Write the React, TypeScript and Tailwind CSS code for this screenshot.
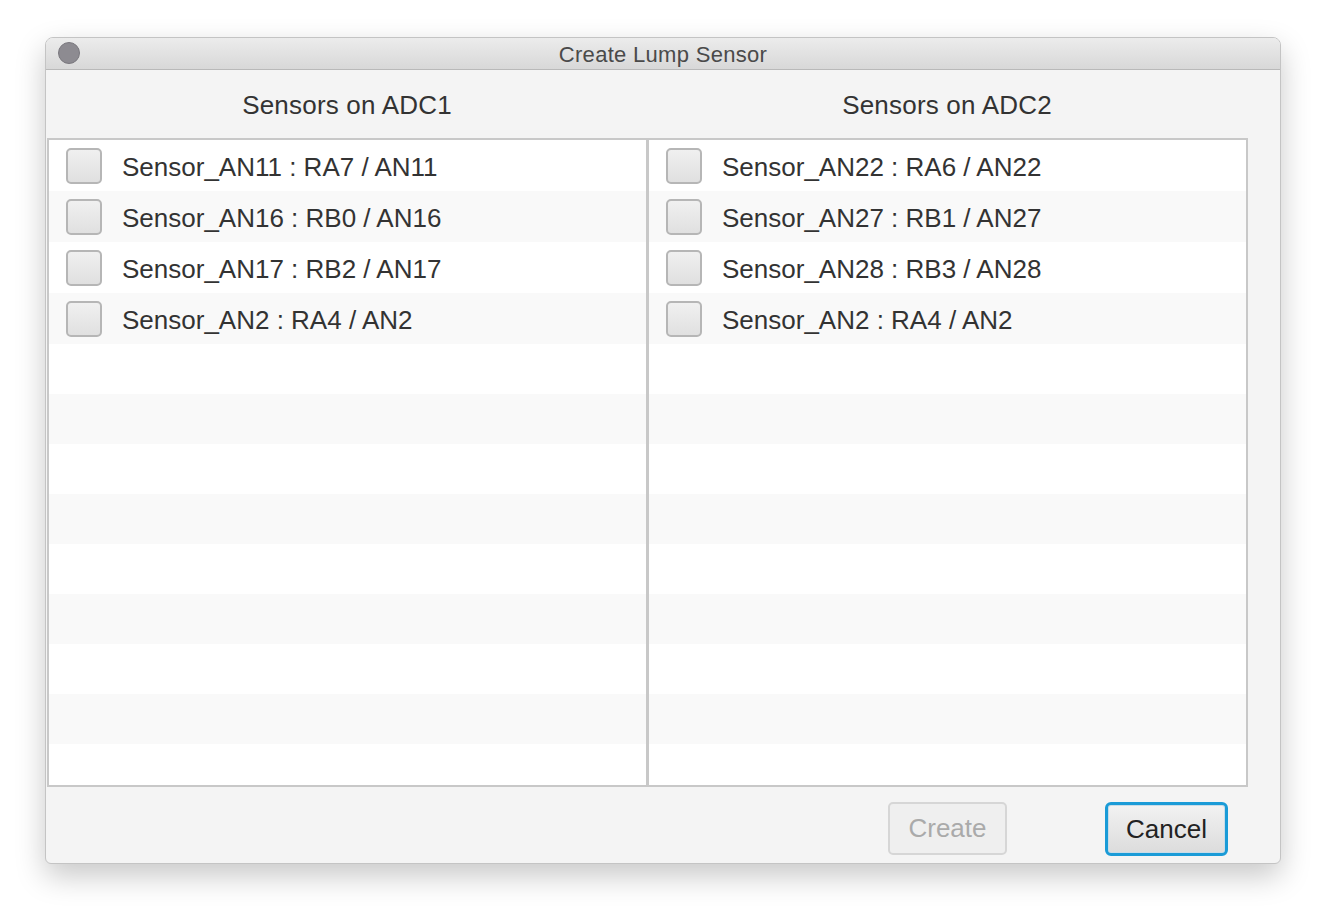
import React from 'react';

const left = [
  'Sensor_AN11 : RA7 / AN11',
  'Sensor_AN16 : RB0 / AN16',
  'Sensor_AN17 : RB2 / AN17',
  'Sensor_AN2 : RA4 / AN2',
];

const right = [
  'Sensor_AN22 : RA6 / AN22',
  'Sensor_AN27 : RB1 / AN27',
  'Sensor_AN28 : RB3 / AN28',
  'Sensor_AN2 : RA4 / AN2',
];

const font = { fontFamily: '"Liberation Sans", Arial, sans-serif' };

function Checkbox() {
  return (
    <div className="w-[36px] h-[36px] shrink-0 rounded-[5px] border-2 border-[#b6b6b6] bg-gradient-to-b from-[#f0f0f0] to-[#e0e0e0]" />
  );
}

function SensorList({ items }: { items: string[] }) {
  const empty = Array.from({ length: 9 });
  return (
    <div className="flex flex-col overflow-hidden bg-white">
      {items.map((label, i) => (
        <div
          key={label + i}
          className={`flex items-center h-[51px] shrink-0 pl-[17px] ${i % 2 === 1 ? 'bg-[#f9f9f9]' : 'bg-white'}`}
        >
          <Checkbox />
          <span className="ml-[20px] pt-[3px] text-[26px] text-[#333333] leading-none">{label}</span>
        </div>
      ))}
      {empty.map((_, i) => (
        <div
          key={i}
          className={`h-[50px] shrink-0 ${(i + items.length) % 2 === 1 ? 'bg-[#f9f9f9]' : 'bg-white'}`}
        />
      ))}
    </div>
  );
}

export default function App() {
  return (
    <div className="w-[1326px] h-[918px] bg-white pt-[37px] pl-[45px]" style={font}>
      <div className="w-[1236px] h-[827px] flex flex-col rounded-t-[8px] rounded-b-[6px] border border-[#c4c4c4] bg-[#f4f4f4] shadow-[0_12px_30px_rgba(0,0,0,0.22)] overflow-hidden">
        {/* title bar */}
        <div className="relative h-[32px] shrink-0 flex items-center justify-center bg-gradient-to-b from-[#ececec] to-[#d8d8d8] border-b border-[#b9b9b9]">
          <div className="absolute left-[12px] top-[4px] w-[22px] h-[22px] rounded-full bg-[#8d8b91] border border-[#7a787e]" />
          <span className="pt-[2px] text-[22px] tracking-[0.3px] text-[#4a4a4a] leading-none">Create Lump Sensor</span>
        </div>

        {/* headers */}
        <div className="flex h-[68px] shrink-0 pl-[1px] pt-[2px]">
          <div className="w-[600px] flex items-center justify-center text-[26px] tracking-[0.2px] text-[#333333]">Sensors on ADC1</div>
          <div className="w-[600px] flex items-center justify-center text-[26px] tracking-[0.2px] text-[#333333]">Sensors on ADC2</div>
        </div>

        {/* lists */}
        <div className="ml-[1px] w-[1201px] h-[649px] shrink-0 border-2 border-[#c8c8c8] grid grid-cols-[597px_3px_597px] bg-white">
          <SensorList items={left} />
          <div className="bg-[#c8c8c8]" />
          <SensorList items={right} />
        </div>

        {/* footer */}
        <div className="flex-1 flex items-start justify-end pt-[15px] pr-[52px]">
          <button className="w-[119px] h-[53px] rounded-[5px] border-2 border-[#d6d6d6] bg-[#efefef] text-[26px] text-[#aaaaaa]">
            Create
          </button>
          <button className="ml-[98px] w-[123px] h-[54px] rounded-[6px] border-[3px] border-[#1a9bd7] bg-gradient-to-b from-[#f2f2f2] to-[#dcdcdc] text-[26px] text-[#222222] shadow-[inset_0_0_0_1px_#c8dce8]">
            Cancel
          </button>
        </div>
      </div>
    </div>
  );
}
